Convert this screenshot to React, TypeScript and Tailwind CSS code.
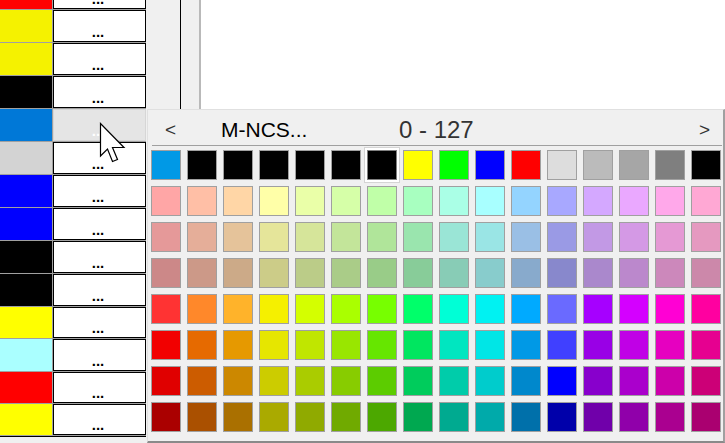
import React from 'react';

// left list: swatch colour + row height (incl. 1px grid line)
const listRows: { color: string; h: string; hover?: boolean }[] = [
  { color: '#ff0000', h: 'h-[33px]' },
  { color: '#f5f200', h: 'h-[33px]' },
  { color: '#f5f200', h: 'h-[33px]' },
  { color: '#000000', h: 'h-[33px]' },
  { color: '#0078d7', h: 'h-[33px]', hover: true },
  { color: '#d3d3d3', h: 'h-[33px]' },
  { color: '#0000ff', h: 'h-[33px]' },
  { color: '#0000ff', h: 'h-[33px]' },
  { color: '#000000', h: 'h-[33px]' },
  { color: '#000000', h: 'h-[33px]' },
  { color: '#ffff00', h: 'h-[32px]' },
  { color: '#aaffff', h: 'h-[33px]' },
  { color: '#ff0000', h: 'h-[32px]' },
  { color: '#ffff00', h: 'h-[32px]' },
];

const palette: string[][] = [
  ['#0099e6', '#000000', '#000000', '#000000', '#000000', '#000000', '#000000', '#ffff00', '#00ff00', '#0000ff', '#ff0000', '#dddddd', '#bbbbbb', '#a6a6a6', '#7f7f7f', '#000000'],
  ['#ffa6a6', '#ffbfa6', '#ffd6a6', '#ffffa8', '#eaffa8', '#d6ffa8', '#c0ffa8', '#a8ffc0', '#aaffe6', '#a8ffff', '#94d4ff', '#a8a8ff', '#d4a8ff', '#eaa8ff', '#ffa8ea', '#ffa8d4'],
  ['#e59999', '#e5ae99', '#e5c39a', '#e5e59a', '#d6e59a', '#c3e59a', '#b0e59a', '#9ae5ae', '#9ae5d6', '#9ae5e5', '#9abfe5', '#9a9ae5', '#c299e5', '#d499e5', '#e599d4', '#e599c0'],
  ['#cc8888', '#cc9988', '#ccaa88', '#cccc88', '#bbcc88', '#aacc88', '#99cc88', '#88cc99', '#88ccb6', '#88cccc', '#88aacc', '#8888cc', '#aa88cc', '#bb88cc', '#cc88bb', '#cc88aa'],
  ['#ff3333', '#ff882a', '#ffb32a', '#f5f000', '#d4ff00', '#aaff00', '#77ff00', '#00ff6a', '#00ffd6', '#00f2f2', '#00aaff', '#6a6aff', '#a600ff', '#d400ff', '#ff00d4', '#ff00a0'],
  ['#f20000', '#e66a00', '#e69900', '#e6e600', '#c0e600', '#99e600', '#66e600', '#00e660', '#00e6c0', '#00e6e6', '#0099e6', '#4040ff', '#9900e6', '#c000e6', '#e600c0', '#e60090'],
  ['#e00000', '#cc5c00', '#cc8800', '#cccc00', '#aacc00', '#88cc00', '#5ccc00', '#00cc5c', '#00ccaa', '#00cccc', '#0088cc', '#0000ff', '#8800cc', '#aa00cc', '#cc00aa', '#cc0077'],
  ['#aa0000', '#aa5000', '#aa7000', '#aaaa00', '#90aa00', '#70aa00', '#4ca800', '#00a850', '#00aa90', '#00aaaa', '#0070aa', '#0000aa', '#7000aa', '#9000aa', '#aa0090', '#aa0070'],
];

function Cursor() {
  return (
    <svg className="absolute left-[99px] top-[122px]" width="28" height="42" viewBox="0 0 28 42">
      <path
        d="M1.5 1.5 L1.5 34 L8.5 27 L13.5 39.5 L18.5 37.5 L13.5 25.5 L25 25.5 Z"
        fill="#ffffff"
        stroke="#000000"
        strokeWidth="1.2"
        strokeLinejoin="miter"
      />
    </svg>
  );
}

export default function App() {
  return (
    <div
      className="relative w-[725px] h-[443px] overflow-hidden bg-[#f0f0f0] flex"
      style={{ fontFamily: '"Liberation Sans", Arial, sans-serif' }}
    >
      {/* colour list with "..." buttons */}
      <div className="w-[146px] flex flex-col mt-[-23px]">
        {listRows.map((r, i) => (
          <div key={i} className={`${r.h} shrink-0 flex gap-px pb-px bg-[#a0a0a0]`}>
            <div className="w-[52px]" style={{ backgroundColor: r.color }} />
            {r.hover ? (
              <div className="w-[93px] border border-[#d6d6d6] bg-[#e5e5e5] flex items-end justify-center pb-[2px] pr-[3px]">
                <span className="text-[15px] font-bold leading-none text-white">...</span>
              </div>
            ) : (
              <div className="w-[93px] border border-black bg-white flex items-end justify-center pb-[2px] pr-[3px]">
                <span className="text-[15px] font-bold leading-none text-black">...</span>
              </div>
            )}
          </div>
        ))}
        <div className="h-px bg-black shrink-0" />
      </div>

      {/* area to the right, behind the popup */}
      <div className="flex-1 flex h-[109px]">
        <div className="w-[34px] bg-[#f0f0f0]" />
        <div className="w-px bg-black" />
        <div className="w-[18px] bg-[#f0f0f0]" />
        <div className="w-[2px] bg-[#b9b9b9]" />
        <div className="flex-1 bg-white" />
      </div>

      {/* palette popup */}
      <div className="absolute left-[147px] top-[109px] right-0 bottom-0 bg-[#f0f0f0] border-l border-t border-[#e0e0e0] border-r-2 border-r-[#a0a0a0] border-b-2 border-b-[#8a8a8a] pl-[3px] pr-px">
        <div className="h-[35px] flex items-center pt-[4px] text-[#333333]">
          <div className="w-[70px] pl-[14px] text-[19px] leading-none">&lt;</div>
          <div className="w-[178px] text-[21px] leading-none text-black">M-NCS...</div>
          <div className="text-[24px] leading-none">0 - 127</div>
          <div className="ml-auto mr-[12px] text-[19px] leading-none">&gt;</div>
        </div>
        <div className="h-px bg-[#a0a0a0] ml-px" />
        <div className="mt-[4px] grid grid-cols-[repeat(16,30px)] gap-[6px]">
          {palette.flatMap((row, ri) =>
            row.map((c, ci) => (
              <div
                key={`${ri}-${ci}`}
                className={
                  ri === 0 && ci === 6
                    ? 'h-[30px] border border-[#808080] outline-2 outline-white shadow-[0_0_0_3px_#d4d4d4]'
                    : 'h-[30px] border border-[#a0a0a0]'
                }
                style={{ backgroundColor: c }}
              />
            ))
          )}
        </div>
      </div>

      <Cursor />
    </div>
  );
}
